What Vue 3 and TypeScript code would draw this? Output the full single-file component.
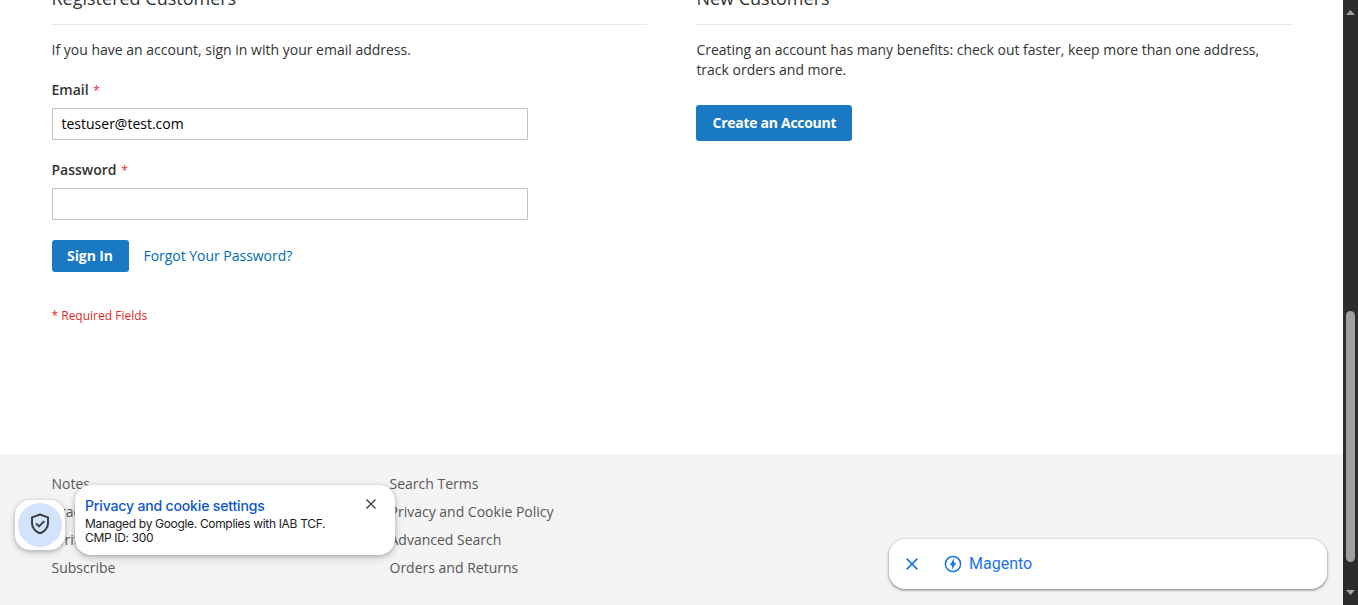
<script setup lang="ts">
import { ref } from 'vue'

const email = ref('testuser@test.com')
const password = ref('')
const footerColumns: string[][] = [
  ['Notes', 'Practice', 'Write for us', 'Subscribe'],
  ['Search Terms', 'Privacy and Cookie Policy', 'Advanced Search', 'Orders and Returns'],
]
</script>

<template>
  <div class="window">
    <div class="page">
      <main class="content">
        <section class="block">
          <h2 class="title"><span>Registered Customers</span></h2>
          <p class="note">If you have an account, sign in with your email address.</p>
          <form class="login" @submit.prevent>
            <label class="label" for="email">Email <span class="star">*</span></label>
            <input id="email" v-model="email" class="field" type="text" />
            <label class="label second" for="password">Password <span class="star">*</span></label>
            <input id="password" v-model="password" class="field" type="password" />
            <div class="actions">
              <button class="button sign-in" type="submit">Sign In</button>
              <a class="forgot">Forgot Your Password?</a>
            </div>
            <p class="required">* Required Fields</p>
          </form>
        </section>
        <section class="block">
          <h2 class="title"><span>New Customers</span></h2>
          <p class="note benefits">Creating an account has many benefits: check out faster, keep more than one address, track orders and more.</p>
          <button class="button create">Create an Account</button>
        </section>
      </main>
      <footer class="footer">
        <ul v-for="(column, i) in footerColumns" :key="i" class="links">
          <li v-for="link in column" :key="link">{{ link }}</li>
        </ul>
      </footer>
    </div>

    <div class="scrollbar">
      <svg class="arrow" width="9" height="5" viewBox="0 0 9 5"><path d="M4.500 0L9 5H0Z" fill="#a0a0a0" /></svg>
      <div class="thumb"></div>
      <svg class="arrow" width="9" height="5" viewBox="0 0 9 5"><path d="M0 0H9L4.500 5Z" fill="#a0a0a0" /></svg>
    </div>

    <div class="shield">
      <div class="shield-disc">
        <svg width="24" height="24" viewBox="0 0 24 24" fill="none" stroke="#3c4043" stroke-width="2">
          <path d="M12 2.500L20 5.400V11.200C20 15.800 16.600 19.900 12 21.200C7.400 19.900 4 15.800 4 11.200V5.400Z" />
          <path d="M8 11.400L11 14.400L16.300 9.100" />
        </svg>
      </div>
    </div>

    <div class="privacy">
      <div class="privacy-text">
        <div class="privacy-title">Privacy and cookie settings</div>
        <div>Managed by Google. Complies with IAB TCF.</div>
        <div>CMP ID: 300</div>
      </div>
      <svg class="privacy-close" width="10" height="10" viewBox="0 0 10 10" stroke="#3c4043" stroke-width="1.400"><path d="M.5 .5L9.500 9.500M9.500 .5L.5 9.500" /></svg>
    </div>

    <div class="anchor">
      <svg width="12" height="12" viewBox="0 0 12 12" stroke="#1a73e8" stroke-width="1.600"><path d="M.6 .6L11.400 11.400M11.400 .6L.6 11.400" /></svg>
      <svg class="bolt" width="18" height="18" viewBox="0 0 18 18">
        <circle cx="9" cy="9" r="7.600" fill="none" stroke="#1a73e8" stroke-width="1.500" />
        <path d="M9.900 3.500V7.800H12.300L8.100 14.500V10.200H5.700Z" fill="#1a73e8" />
      </svg>
      <span>Magento</span>
    </div>
  </div>
</template>

<style>
body {
  margin: 0;
  overflow: hidden;
}
</style>

<style scoped>
.window {
  position: relative;
  display: flex;
  width: 1358px;
  height: 605px;
  overflow: hidden;
  background: #fff;
  color: #333;
  font: 14px/20px 'Open Sans', 'Noto Sans', sans-serif;
}
.page {
  display: flex;
  flex-direction: column;
  width: 1343px;
}
.content {
  display: grid;
  grid-template-columns: 595.300px 595.300px;
  column-gap: 49.600px;
  height: 454px;
  padding-left: 51.500px;
  box-sizing: border-box;
}
.title {
  display: flow-root;
  height: 24px;
  margin: 0 0 15px;
  border-bottom: 1px solid #e8e8e8;
  font-size: 18px;
  font-weight: 400;
  line-height: 20px;
}
.title span {
  display: block;
  margin-top: -12px;
}
.block {
  display: flow-root;
}
.note {
  margin: 0 0 20px;
}
.benefits {
  letter-spacing: -0.01px;
}
.login {
  display: flex;
  flex-direction: column;
}
.label {
  height: 20px;
  margin-bottom: 8px;
  font-weight: 600;
}
.second {
  margin-top: 20px;
}
.star {
  margin-left: 1px;
  color: #e02b27;
  font-size: 12px;
  font-weight: 400;
  line-height: 1;
}
.field {
  width: 476.200px;
  height: 32px;
  box-sizing: border-box;
  padding: 0 9px 1px;
  border: 1px solid #c2c2c2;
  background: #fff;
  color: #000;
  font: 14px/20px 'Open Sans', sans-serif;
  outline: 0;
}
.actions {
  display: flex;
  align-items: center;
  gap: 15px;
  margin-top: 20px;
}
.button {
  border: 0;
  border-radius: 3px;
  background: #1979c3;
  color: #fff;
  font: 700 14px/20px 'Open Sans', sans-serif;
  padding: 0;
}
.sign-in {
  width: 77px;
  height: 32px;
  letter-spacing: -0.1px;
}
.create {
  width: 156px;
  height: 36px;
  margin-top: 5px;
  letter-spacing: -0.28px;
}
.forgot {
  color: #006bb4;
  letter-spacing: -0.03px;
}
.required {
  margin: 34px 0 0;
  color: #e02b27;
  font-size: 12px;
}
.footer {
  display: grid;
  grid-template-columns: 338px 338px;
  height: 151px;
  padding-left: 51.500px;
  box-sizing: border-box;
  background: #f4f4f4;
  color: #575757;
}
.links {
  margin: 20px 0 0;
  padding: 0;
  list-style: none;
}
.links li {
  height: 28px;
}
.scrollbar {
  display: flex;
  flex-direction: column;
  align-items: center;
  width: 15px;
  height: 605px;
  padding: 10px 0;
  box-sizing: border-box;
  background: #2c2c2c;
}
.thumb {
  width: 9px;
  height: 251px;
  margin: 296px 0 28px;
  border-radius: 5px;
  background: #9f9f9f;
}
.arrow {
  flex: none;
}
.shield {
  position: absolute;
  left: 15px;
  top: 500px;
  display: grid;
  place-items: center;
  width: 50px;
  height: 50px;
  border-radius: 15px;
  background: #fff;
  box-shadow: 0 1px 4px rgba(0, 0, 0, 0.25), 0 4px 10px rgba(0, 0, 0, 0.1);
}
.shield-disc {
  display: grid;
  place-items: center;
  width: 44px;
  height: 44px;
  padding-bottom: 2px;
  box-sizing: border-box;
  border-radius: 50%;
  background: #d2e3fc;
}
.privacy {
  position: absolute;
  left: 75px;
  top: 485px;
  display: flex;
  justify-content: space-between;
  width: 320px;
  height: 70px;
  padding: 12px 19px 0 10px;
  box-sizing: border-box;
  border-radius: 16px;
  background: #fff;
  color: #202124;
  box-shadow: 0 1px 4px rgba(0, 0, 0, 0.25), 0 4px 10px rgba(0, 0, 0, 0.12);
  font: 12px/14px Inter, sans-serif;
  letter-spacing: -0.33px;
  white-space: nowrap;
}
.privacy-title {
  height: 20px;
  color: #0b57d0;
  font-size: 14px;
  font-weight: 500;
  line-height: 18px;
  letter-spacing: -0.15px;
}
.privacy-close {
  margin-top: 2px;
}
.anchor {
  position: absolute;
  left: 889px;
  top: 539px;
  display: flex;
  align-items: center;
  width: 438px;
  height: 50px;
  padding-left: 17px;
  box-sizing: border-box;
  border-radius: 16px;
  background: #fff;
  color: #1a73e8;
  box-shadow: 0 1px 3px rgba(0, 0, 0, 0.55);
  font: 16px/20px Roboto, sans-serif;
}
.bolt {
  margin: 0 7px 0 26px;
}
</style>
